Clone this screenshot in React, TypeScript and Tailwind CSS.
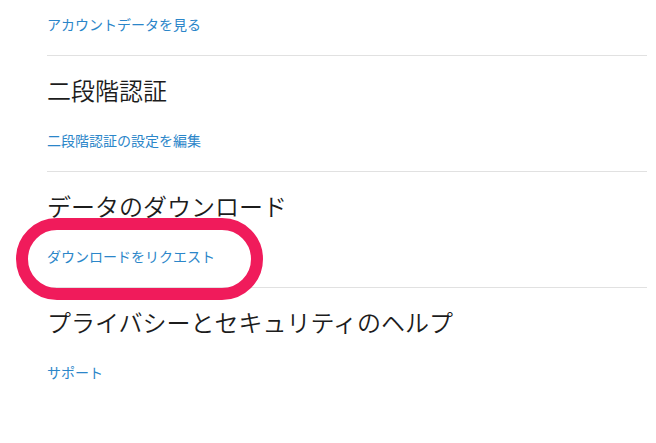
import React from "react";

const font = { fontFamily: '"Noto Sans CJK JP", "Noto Sans", sans-serif' };

function Section({ title, link, last }: { title: string; link: string; last?: boolean }) {
  return (
    <div className={last ? "pt-[18px]" : "pt-[18px] pb-[21px] border-b border-[#e1e1e1]"}>
      <h2 className="text-[24px] leading-[32px] text-[#1c1c1c] font-[350]">{title}</h2>
      <a className="block mt-[24px] text-[14px] leading-[20px] text-[#2b86c9]">{link}</a>
    </div>
  );
}

export default function App() {
  return (
    <div className="relative w-[656px] h-[443px] bg-white overflow-hidden" style={font}>
      <div className="pl-[47px] pr-[9px]">
        <div className="pt-[14px] pb-[21px] border-b border-[#e1e1e1]">
          <a className="block text-[14px] leading-[20px] text-[#2b86c9]">アカウントデータを見る</a>
        </div>
        <Section title="二段階認証" link="二段階認証の設定を編集" />
        <Section title="データのダウンロード" link="ダウンロードをリクエスト" />
        <Section title="プライバシーとセキュリティのヘルプ" link="サポート" last />
      </div>
      <div className="absolute left-[16px] top-[218px] w-[247px] h-[82px] rounded-full border-[12px] border-[#f01b5b] pointer-events-none" />
    </div>
  );
}
